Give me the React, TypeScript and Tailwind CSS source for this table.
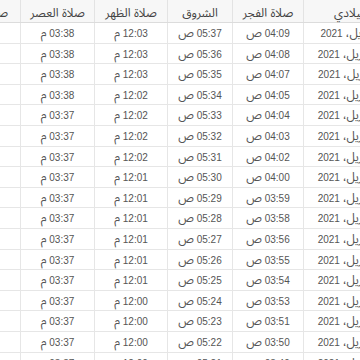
const headers = ['ميلادي', 'صلاة الفجر', 'الشروق', 'صلاة الظهر', 'صلاة العصر', 'صلاة المغرب'];

// column widths, right to left
const widths = ['w-[94px]', 'w-[71px]', 'w-[65px]', 'w-[73px]', 'w-[74px]', 'w-[87px]'];

const rows = [
  ['04:09', '05:37', '12:03', '03:38', '06:28'],
  ['04:08', '05:36', '12:03', '03:38', '06:29'],
  ['04:07', '05:35', '12:03', '03:38', '06:30'],
  ['04:05', '05:34', '12:02', '03:38', '06:30'],
  ['04:04', '05:33', '12:02', '03:37', '06:31'],
  ['04:03', '05:32', '12:02', '03:37', '06:32'],
  ['04:02', '05:31', '12:02', '03:37', '06:32'],
  ['04:00', '05:30', '12:01', '03:37', '06:33'],
  ['03:59', '05:29', '12:01', '03:37', '06:34'],
  ['03:58', '05:28', '12:01', '03:37', '06:34'],
  ['03:56', '05:27', '12:01', '03:37', '06:35'],
  ['03:55', '05:26', '12:01', '03:37', '06:36'],
  ['03:54', '05:25', '12:01', '03:37', '06:36'],
  ['03:53', '05:24', '12:00', '03:37', '06:37'],
  ['03:51', '05:23', '12:00', '03:37', '06:38'],
  ['03:50', '05:22', '12:00', '03:37', '06:38'],
  ['03:49', '05:21', '12:00', '03:37', '06:39'],
];

export default function App() {
  return (
    <div
      dir="rtl"
      className="w-[360px] h-[360px] overflow-hidden bg-white text-[10px] text-[#555]"
      style={{ fontFamily: '"Liberation Sans", "Noto Sans Arabic", "DejaVu Sans", sans-serif' }}
    >
      <div className="flex flex-col w-[464px] -mr-[37px]">
        <div className="flex h-[23px] bg-[#f7f7f7] border-b border-[#dcdcdc] text-[#444]">
          {headers.map((h, i) => (
            <div
              key={h}
              className={`${widths[i]} shrink-0 pt-[5px] text-center text-[12px] leading-[16px] border-l border-[#e3e3e3] whitespace-nowrap`}
            >
              {h}
            </div>
          ))}
        </div>
        {rows.map((r, idx) => (
          <div key={idx} className="flex h-[20.6px] border-b border-[#e6e6e6]">
            <div className={`${widths[0]} shrink-0 pt-[4px] text-center leading-[13px] border-l border-[#e6e6e6] whitespace-nowrap`}>
              {idx + 9} <span className="text-[12px]">ابريل،</span> 2021
            </div>
            {r.map((t, j) => (
              <div
                key={j}
                className={`${widths[j + 1]} shrink-0 pt-[4px] text-center leading-[13px] border-l border-[#e6e6e6] whitespace-nowrap`}
              >
                {t} <span className="text-[12px]">{j < 2 ? 'ص' : 'م'}</span>
              </div>
            ))}
          </div>
        ))}
      </div>
    </div>
  );
}
